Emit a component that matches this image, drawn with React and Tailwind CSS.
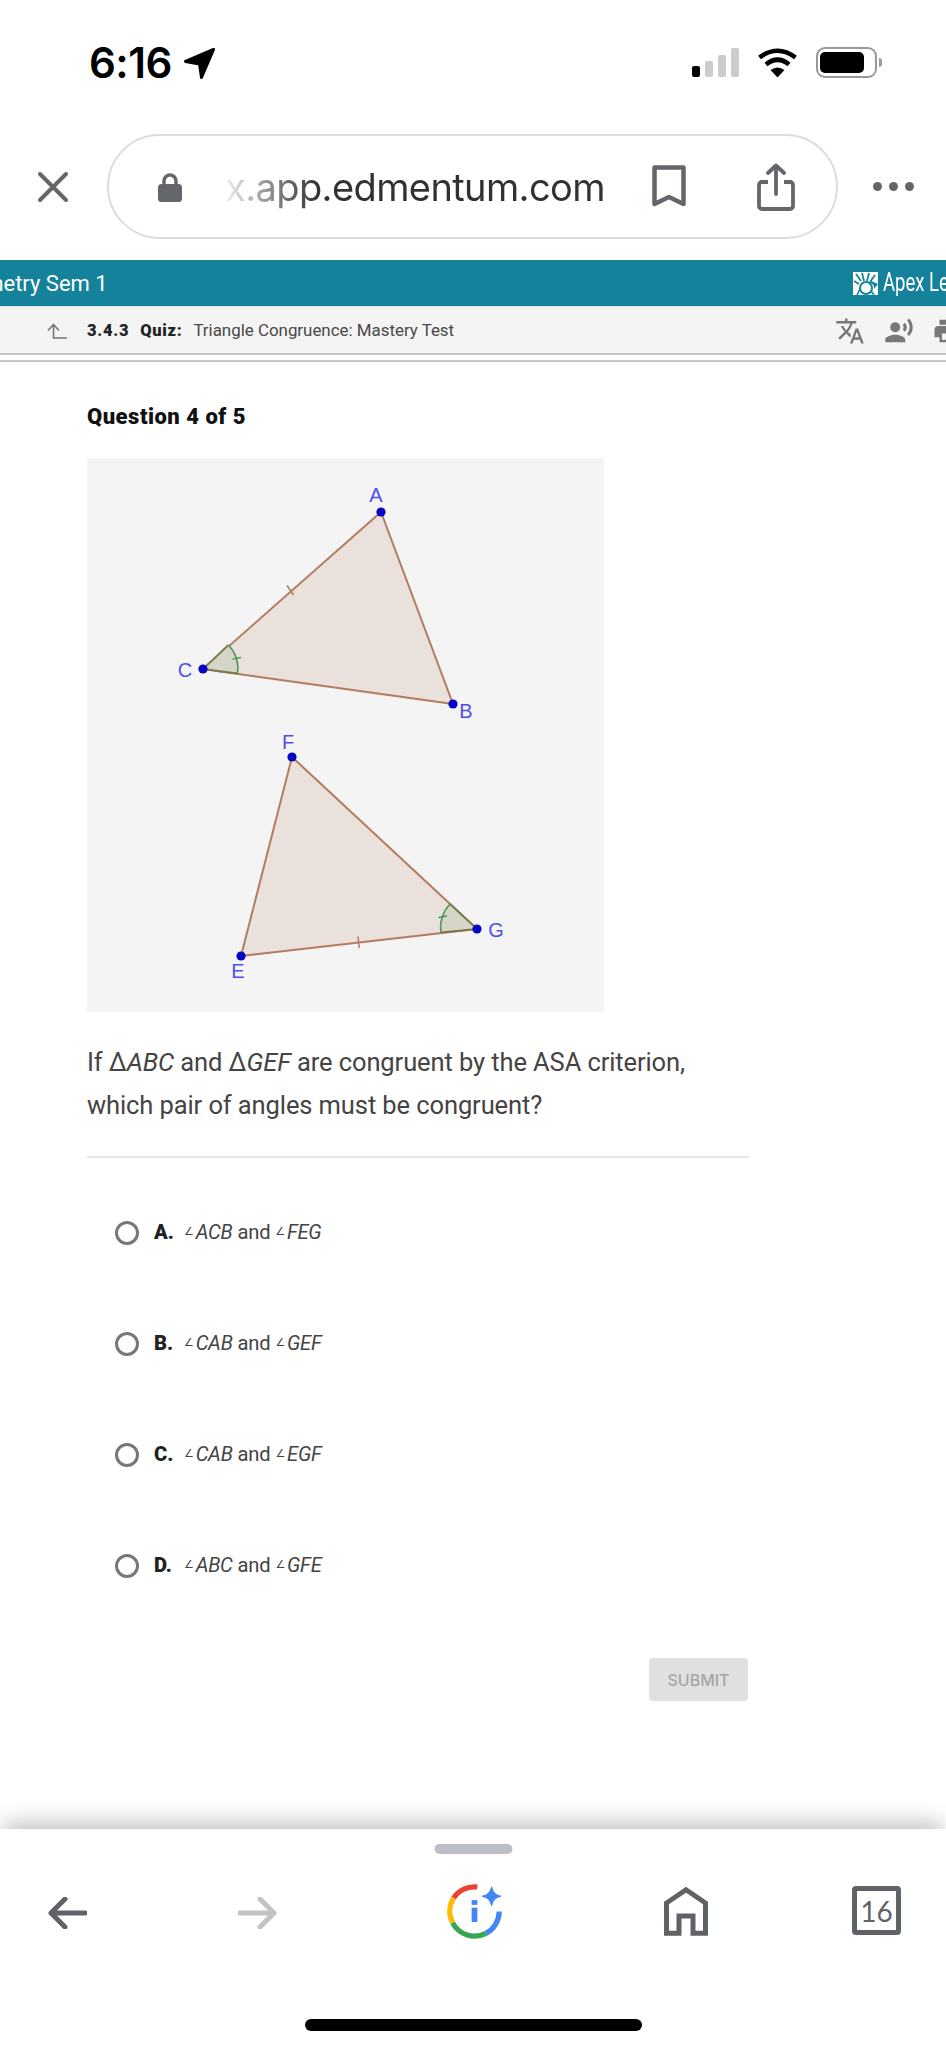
import React from "react";
import { MdTranslate, MdRecordVoiceOver, MdPrint } from "react-icons/md";

const roboto = "font-['Roboto',sans-serif]";

function Geometry() {
  const blue = "#4f4fe8";
  const edge = "#b27c60";
  const green = "#4f9a5e";
  return (
    <svg viewBox="87 458 517 554" className="block w-[517px] h-[554px]">
      <polygon points="381,512 453,704 203,669" fill="#eae0dc" stroke={edge} strokeWidth="2" />
      <polygon points="292,757 477,929 241,956" fill="#eae0dc" stroke={edge} strokeWidth="2" />
      <path d="M203 669 L228.5 645 A35 35 0 0 1 237.5 673.5 Z" fill="#d6d6c8" />
      <path d="M228.5 645 A35 35 0 0 1 237.5 673.5" fill="none" stroke={green} strokeWidth="1.6" />
      <path d="M232.5 659 L241 657.5" stroke={green} strokeWidth="1.4" />
      <path d="M477 929 L450 904 A35 35 0 0 0 441 932.5 Z" fill="#d6d6c8" />
      <path d="M450 904 A35 35 0 0 0 441 932.5" fill="none" stroke={green} strokeWidth="1.6" />
      <path d="M438.5 917.5 L447 916" stroke={green} strokeWidth="1.4" />
      <path d="M203 669 L228.5 645 M203 669 L237.5 673.5 M477 929 L450 904 M477 929 L441 932.5" stroke="#7d7a48" strokeWidth="1.8" />
      <path d="M287 585.5 L293.5 595" stroke={edge} strokeWidth="1.5" />
      <path d="M358 936.5 L359.3 948" stroke={edge} strokeWidth="1.5" />
      {[[381, 512], [453, 704], [203, 669], [292, 757], [477, 929], [241, 956]].map(([x, y]) => (
        <circle key={`${x}-${y}`} cx={x} cy={y} r="4.6" fill="#0505c4" />
      ))}
      <g fill={blue} fontFamily="'Liberation Sans', sans-serif" fontSize="20" textAnchor="middle">
        <text x="376" y="502">A</text>
        <text x="185" y="677">C</text>
        <text x="466" y="718">B</text>
        <text x="288" y="749">F</text>
        <text x="496" y="937">G</text>
        <text x="238" y="978">E</text>
      </g>
    </svg>
  );
}

function Option({ letter, a, b }) {
  return (
    <div className={`flex h-[111px] items-center pl-[28px] ${roboto} text-[20.2px] text-[#444]`}>
      <span className="box-border h-[24px] w-[24px] rounded-full border-[3px] border-[#777] bg-white" />
      <span className="ml-[15px] w-[30px] font-black text-[#222]">{letter}</span>
      <span className="flex items-center tracking-[-0.25px]">
        <span className="mr-[2px] font-['DejaVu_Sans',sans-serif] text-[11px]">∠</span>
        <i>{a}</i>
        <span className="mx-[5px]">and</span>
        <span className="mr-[2px] font-['DejaVu_Sans',sans-serif] text-[11px]">∠</span>
        <i>{b}</i>
      </span>
    </div>
  );
}

export default function App() {
  return (
    <div className="flex h-[2048px] w-[946px] flex-col overflow-hidden bg-white">
      {/* status bar */}
      <div className="flex h-[134px] items-start pt-[43px]">
        <span className="ml-[89px] w-[83px] whitespace-nowrap font-['Inter',sans-serif] text-[42px] font-semibold leading-[40px] tracking-[-0.5px] text-black">6:16</span>
        <svg viewBox="0 0 31 31" className="ml-[12px] mt-[5px] h-[31px] w-[31px]">
          <path d="M29.5 1.5 L1.5 13.5 L15.5 16 L17.5 29.5 Z" fill="#000" stroke="#000" strokeWidth="3" strokeLinejoin="round" />
        </svg>
        <div className="ml-[477px] mt-[5px] flex h-[29px] items-end gap-[5px]">
          <span className="h-[11px] w-[8px] rounded-[2px] bg-black" />
          <span className="h-[16px] w-[8px] rounded-[2px] bg-[#cccccc]" />
          <span className="h-[22px] w-[8px] rounded-[2px] bg-[#cccccc]" />
          <span className="h-[29px] w-[8px] rounded-[2px] bg-[#cccccc]" />
        </div>
        <svg viewBox="0 0 41 31" className="ml-[18px] mt-[4px] h-[31px] w-[41px]">
          <path d="M2.5 10.5 Q20.5 -3 38.5 10.5" fill="none" stroke="#000" strokeWidth="4.6" />
          <path d="M9 17.5 Q20.5 8 32 17.5" fill="none" stroke="#000" strokeWidth="4.6" />
          <path d="M13.5 23 Q20.5 18 27.5 23 L20.5 30.5 Z" fill="#000" />
        </svg>
        <div className="ml-[18px] mt-[4px] box-border flex h-[31px] w-[61px] items-center rounded-[9px] border-[2.5px] border-[#999] pl-[2px]">
          <span className="h-[21px] w-[44px] rounded-[5px] bg-black" />
        </div>
        <span className="ml-[2px] mt-[15px] h-[9px] w-[3px] rounded-r-[3px] bg-[#999]" />
      </div>

      {/* url row */}
      <div className="flex h-[105px] shrink-0 items-center">
        <svg viewBox="0 0 32 32" className="ml-[37px] h-[32px] w-[32px]">
          <path d="M3 3 L29 29 M29 3 L3 29" stroke="#63666b" strokeWidth="4" strokeLinecap="round" />
        </svg>
        <div className="ml-[38px] box-border flex h-[105px] w-[731px] items-center rounded-full border-2 border-[#dcdcdc]">
          <svg viewBox="0 0 24 30" className="ml-[49px] h-[30px] w-[24px]">
            <path d="M6 14 V9 a6 6 0 0 1 12 0 V14" fill="none" stroke="#63666b" strokeWidth="3.4" />
            <rect x="0" y="12" width="24" height="18" rx="3.5" fill="#63666b" />
          </svg>
          <span className="ml-[43px] w-[380px] whitespace-nowrap bg-gradient-to-r from-[#f0f0f0] via-[#2f3133] via-[25%] to-[#2f3133] bg-clip-text font-['Inter',sans-serif] text-[38px] leading-[50px] tracking-[-0.6px] text-transparent">x.app.edmentum.com</span>
          <svg viewBox="0 0 34 43" className="ml-[47px] h-[43px] w-[34px]">
            <path d="M2.5 2.5 H31.5 V39 L17 32 L2.5 39 Z" fill="none" stroke="#63666b" strokeWidth="4.5" strokeLinejoin="round" />
          </svg>
          <svg viewBox="0 0 38 48" className="ml-[71px] h-[48px] w-[38px]">
            <path d="M11 19 H5 a3 3 0 0 0 -3 3 V43 a3 3 0 0 0 3 3 H33 a3 3 0 0 0 3 -3 V22 a3 3 0 0 0 -3 -3 H27" fill="none" stroke="#63666b" strokeWidth="3.8" />
            <path d="M19 31 V3 M11 10 L19 2.5 L27 10" fill="none" stroke="#63666b" strokeWidth="3.8" strokeLinecap="round" strokeLinejoin="round" />
          </svg>
        </div>
        <div className="ml-[35px] flex gap-[7px]">
          <span className="h-[9px] w-[9px] rounded-full bg-[#63666b]" />
          <span className="h-[9px] w-[9px] rounded-full bg-[#63666b]" />
          <span className="h-[9px] w-[9px] rounded-full bg-[#63666b]" />
        </div>
      </div>

      {/* course bar */}
      <div className="mt-[21px] flex h-[47px] shrink-0 items-center justify-between border-b border-[#dfe9ec] bg-[#14829a] text-white">
        <span className={`${roboto} -ml-[55px] whitespace-nowrap text-[22px]`}>Geometry Sem 1</span>
        <div className="flex items-center">
          <svg viewBox="0 0 25 23" className="h-[23px] w-[25px]">
            <rect width="25" height="23" fill="#fff" />
            <path d="M3 2 L8 9 M9 1 L11 9 M16 1 L14 9 M22 3 L17 10 M1 9 L6 12" stroke="#14829a" strokeWidth="1.8" />
            <circle cx="13" cy="16" r="6" fill="none" stroke="#14829a" strokeWidth="2" />
            <path d="M15 11 a5 5 0 0 1 6 6 L25 12 L18 9 Z" fill="#14829a" />
            <path d="M4 23 L7 17 M21 23 L18 19" stroke="#14829a" strokeWidth="1.6" />
          </svg>
          <span className="ml-[5px] inline-block w-[63px] origin-left scale-x-[0.74] whitespace-nowrap font-['Roboto',sans-serif] text-[25px] leading-[30px]">Apex Learning</span>
        </div>
      </div>

      {/* lesson bar */}
      <div className={`flex h-[48px] shrink-0 items-center border-b-[2px] border-[#c6c6c6] bg-[#f4f4f4] pt-[2px] ${roboto}`}>
        <svg viewBox="0 0 20 16" className="ml-[47px] h-[16px] w-[20px]">
          <path d="M1 7.5 L6.5 1.5 L12 7.5 M6.5 1.5 V15 H20" fill="none" stroke="#777" strokeWidth="1.6" />
        </svg>
        <span className="ml-[20px] text-[16.5px] font-black tracking-[0.7px] text-[#222]">3.4.3</span>
        <span className="ml-[11px] text-[16.5px] font-black tracking-[0.7px] text-[#222]">Quiz:</span>
        <span className="ml-[11px] whitespace-nowrap text-[16.9px] text-[#484848]">Triangle Congruence: Mastery Test</span>
        <div className="ml-auto flex items-center text-[#777]">
          <MdTranslate className="h-[30px] w-[30px]" />
          <MdRecordVoiceOver className="ml-[19px] h-[30px] w-[30px]" />
          <MdPrint className="-mr-[16px] ml-[18px] h-[30px] w-[30px]" />
        </div>
      </div>
      <div className="mt-[5px] h-[2px] shrink-0 bg-[#c6c6c6]" />

      {/* content */}
      <main className={`min-h-0 flex-1 pl-[87px] ${roboto}`}>
        <h2 className="mt-[43px] text-[22px] font-black leading-[24px] tracking-[0.5px] text-[#111]">Question 4 of 5</h2>
        <div className="mt-[29px] w-[517px] bg-[#f4f4f4]">
          <Geometry />
        </div>
        <p className="mt-[29px] w-[662px] text-[25.5px] leading-[43px] tracking-[-0.1px] text-[#444]">
          If <span>Δ</span><i>ABC</i> and <span>Δ</span><i>GEF</i> are congruent by the ASA criterion,
          <br />
          which pair of angles must be congruent?
        </p>
        <div className="mt-[29px] h-[2px] w-[662px] bg-[#e8e8e8]" />
        <div className="mt-[19px] w-[662px]">
          <Option letter="A." a="ACB" b="FEG" />
          <Option letter="B." a="CAB" b="GEF" />
          <Option letter="C." a="CAB" b="EGF" />
          <Option letter="D." a="ABC" b="GFE" />
        </div>
        <div className="mt-[37px] flex w-[661px] justify-end">
          <button className="h-[43px] w-[99px] rounded-[4px] bg-[#e0e0e0] font-['Inter',sans-serif] text-[16px] font-medium text-[#a6a6a6]">SUBMIT</button>
        </div>
      </main>

      {/* bottom bar */}
      <div className="relative h-[219px] shrink-0 bg-white pt-[15px] shadow-[0_-12px_20px_-4px_rgba(0,0,0,0.22)]">
        <div className="mx-auto h-[10px] w-[78px] translate-x-[.5px] rounded-full bg-[#bcc0c6]" />
        <div className="mt-[30px] flex h-[55px] items-center">
          <svg viewBox="0 0 39 32" className="ml-[48px] mt-[2px] h-[32px] w-[39px]">
            <path d="M37 16 H3 M17 2 L3 16 L17 30" fill="none" stroke="#5f6368" strokeWidth="5" strokeLinecap="round" strokeLinejoin="round" />
          </svg>
          <svg viewBox="0 0 39 32" className="ml-[151px] mt-[2px] h-[32px] w-[39px]">
            <path d="M2 16 H36 M22 2 L36 16 L22 30" fill="none" stroke="#c1c3c6" strokeWidth="5" strokeLinecap="round" strokeLinejoin="round" />
          </svg>
          <svg viewBox="0 0 60 60" className="-mt-[1px] ml-[169px] h-[57px] w-[57px]">
            <path d="M33 4.2 A26 26 0 0 0 8 16" fill="none" stroke="#ea4335" strokeWidth="5.5" />
            <path d="M8 16 A26 26 0 0 0 7 42" fill="none" stroke="#fbbc04" strokeWidth="5.5" />
            <path d="M7 42 A26 26 0 0 0 42 53" fill="none" stroke="#34a853" strokeWidth="5.5" />
            <path d="M42 53 A26 26 0 0 0 56 30" fill="none" stroke="#4285f4" strokeWidth="5.5" />
            <rect x="27" y="18" width="6" height="5" fill="#4285f4" />
            <rect x="27" y="26" width="6" height="15" fill="#4285f4" />
            <path d="M48 4 Q49.5 12.5 58 14 Q49.5 15.5 48 24 Q46.5 15.5 38 14 Q46.5 12.5 48 4 Z" fill="#4285f4" stroke="#4285f4" strokeWidth="1" />
          </svg>
          <svg viewBox="0 0 44 49" className="ml-[161px] h-[49px] w-[44px]">
            <path d="M15 46.2 H2.5 V16 L22 2.8 L41.5 16 V46.2 H29 V29 H15 Z" fill="none" stroke="#5f6368" strokeWidth="5" />
          </svg>
          <div className="-mt-[2px] ml-[144px] box-border flex h-[49px] w-[49px] items-center justify-center rounded-[4px] border-[5px] border-[#5f6368] font-['Lato',sans-serif] text-[28px] text-[#5f6368]">16</div>
        </div>
        <div className="ml-[305px] mt-[80px] h-[12px] w-[337px] rounded-full bg-black" />
      </div>
    </div>
  );
}
